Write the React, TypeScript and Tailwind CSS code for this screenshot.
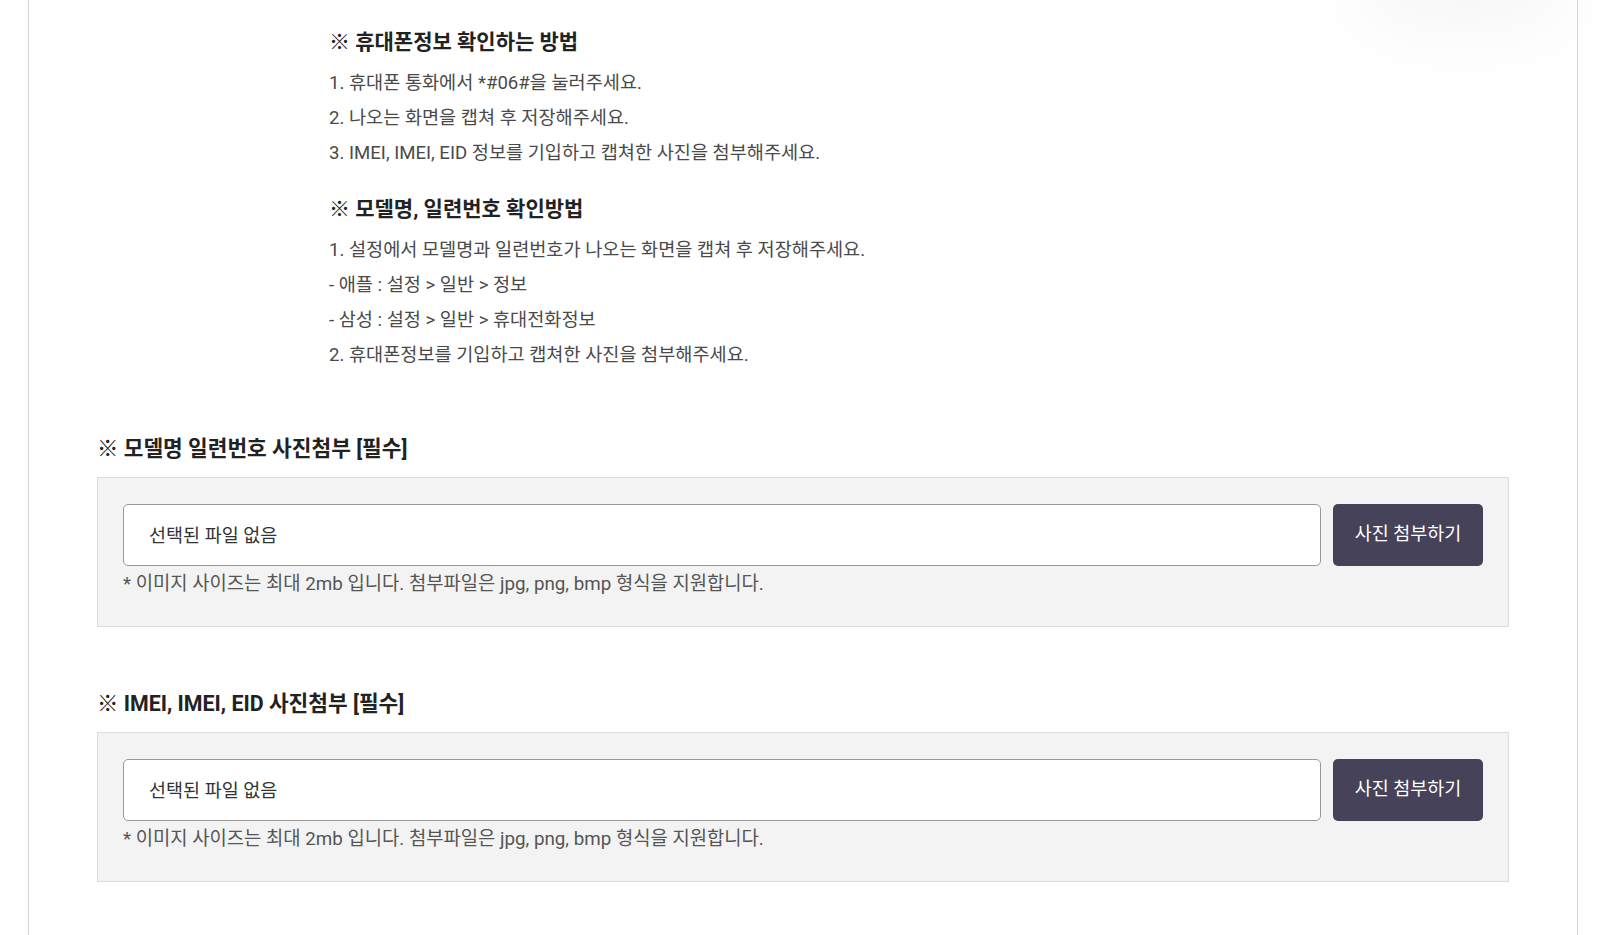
import React from "react";

const font = { fontFamily: 'Roboto, "Noto Sans CJK KR", sans-serif' };

const guideA = [
  "1. 휴대폰 통화에서 *#06#을 눌러주세요.",
  "2. 나오는 화면을 캡쳐 후 저장해주세요.",
  "3. IMEI, IMEI, EID 정보를 기입하고 캡쳐한 사진을 첨부해주세요.",
];

const guideB = [
  "1. 설정에서 모델명과 일련번호가 나오는 화면을 캡쳐 후 저장해주세요.",
  "- 애플 : 설정 > 일반 > 정보",
  "- 삼성 : 설정 > 일반 > 휴대전화정보",
  "2. 휴대폰정보를 기입하고 캡쳐한 사진을 첨부해주세요.",
];

function Guide({ title, lines }: { title: string; lines: string[] }) {
  return (
    <div>
      <h3 className="text-[21px] font-bold leading-[27px] text-[#222]">{title}</h3>
      <ul className="mt-[10px]">
        {lines.map((l) => (
          <li key={l} className="text-[18.6px] leading-[35px] text-[#4a4a4a]">
            {l}
          </li>
        ))}
      </ul>
    </div>
  );
}

function Attach({ title, className }: { title: string; className: string }) {
  return (
    <section className={className}>
      <h4 className="text-[21.4px] font-bold leading-[27px] text-[#222]">{title}</h4>
      <div className="mt-[15px] h-[150px] border border-[#dcdcdc] bg-[#f3f3f3] px-[25px] pt-[26px]">
        <div className="flex gap-[12px]">
          <div className="flex h-[62px] flex-1 items-center rounded-[5px] border border-[#999] bg-white pl-[25px] pt-[3px] text-[18.5px] text-[#333]">
            선택된 파일 없음
          </div>
          <button className="h-[62px] w-[150px] rounded-[5px] bg-[#45425a] text-[18.5px] text-white">
            사진 첨부하기
          </button>
        </div>
        <p className="mt-[6px] text-[18.8px] leading-[24px] text-[#555]">
          * 이미지 사이즈는 최대 2mb 입니다. 첨부파일은 jpg, png, bmp 형식을 지원합니다.
        </p>
      </div>
    </section>
  );
}

export default function App() {
  return (
    <div className="relative min-h-[935px] w-full overflow-hidden bg-white" style={font}>
      <div className="pointer-events-none absolute right-[40px] top-[-60px] h-[80px] w-[200px] rounded-full bg-[#f4f4f6] blur-2xl" />
      <div className="relative ml-[28px] min-h-[935px] w-[1550px] border-x border-[#d4d4d4] px-[68px] pb-[60px] pt-[29px]">
        <div className="flex flex-col gap-[25px] pl-[232px]">
          <Guide title="※ 휴대폰정보 확인하는 방법" lines={guideA} />
          <Guide title="※ 모델명, 일련번호 확인방법" lines={guideB} />
        </div>
        <Attach className="mt-[62px]" title="※ 모델명 일련번호 사진첨부 [필수]" />
        <Attach className="mt-[63px]" title="※ IMEI, IMEI, EID 사진첨부 [필수]" />
      </div>
    </div>
  );
}
